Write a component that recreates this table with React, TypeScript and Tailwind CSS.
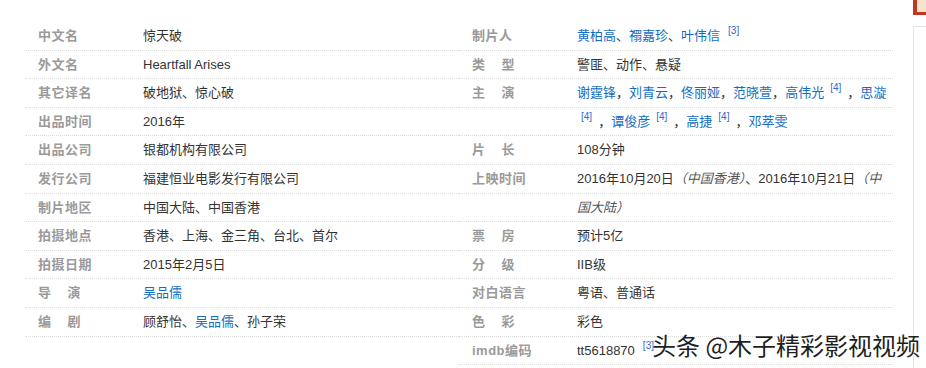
import type { ReactNode } from 'react';

type Row = { label?: string; value: ReactNode };

const A = ({ children }: { children: ReactNode }) => (
  <a className="text-[#136ec2] no-underline">{children}</a>
);

const Ref = ({ n, className = '' }: { n: number; className?: string }) => (
  <span className={`relative -top-[6px] text-[10px] text-[#3366cc] ${className}`}>[{n}]</span>
);

const Note = ({ children }: { children: ReactNode }) => (
  <span className="italic text-[#555]">{children}</span>
);

const leftRows: Row[] = [
  { label: '中文名', value: '惊天破' },
  { label: '外文名', value: 'Heartfall Arises' },
  { label: '其它译名', value: '破地狱、惊心破' },
  { label: '出品时间', value: '2016年' },
  { label: '出品公司', value: '银都机构有限公司' },
  { label: '发行公司', value: '福建恒业电影发行有限公司' },
  { label: '制片地区', value: '中国大陆、中国香港' },
  { label: '拍摄地点', value: '香港、上海、金三角、台北、首尔' },
  { label: '拍摄日期', value: '2015年2月5日' },
  { label: '导演', value: <A>吴品儒</A> },
  {
    label: '编剧',
    value: (
      <>
        顾舒怡、<A>吴品儒</A>、孙子荣
      </>
    ),
  },
];

const rightRows: Row[] = [
  {
    label: '制片人',
    value: (
      <>
        <A>黄柏高</A>、<A>禤嘉珍</A>、<A>叶伟信</A>
        <Ref n={3} className="ml-[8px]" />
      </>
    ),
  },
  { label: '类型', value: '警匪、动作、悬疑' },
  {
    label: '主演',
    value: (
      <>
        <A>谢霆锋</A>，<A>刘青云</A>，<A>佟丽娅</A>，<A>范晓萱</A>，<A>高伟光</A>
        <Ref n={4} className="ml-[6px] mr-[6px]" />，<A>思漩</A>
      </>
    ),
  },
  {
    value: (
      <>
        <Ref n={4} className="ml-[4px] mr-[6px]" />，<A>谭俊彦</A>
        <Ref n={4} className="ml-[6px] mr-[6px]" />，<A>高捷</A>
        <Ref n={4} className="ml-[6px] mr-[6px]" />，<A>邓萃雯</A>
      </>
    ),
  },
  { label: '片长', value: '108分钟' },
  {
    label: '上映时间',
    value: (
      <>
        2016年10月20日<Note>（中国香港）</Note>、2016年10月21日<Note>（中</Note>
      </>
    ),
  },
  { value: <Note>国大陆）</Note> },
  { label: '票房', value: '预计5亿' },
  { label: '分级', value: 'IIB级' },
  { label: '对白语言', value: '粤语、普通话' },
  { label: '色彩', value: '彩色' },
  { label: 'imdb编码', value: <>tt5618870<Ref n={3} className="ml-[8px]" /></> },
];

function Label({ text }: { text?: string }) {
  if (!text) return <span className="w-[105px] shrink-0" />;
  const two = text.length === 2;
  return (
    <span className="w-[105px] shrink-0 font-bold text-[#9a9a9a] tracking-[0.5px]">
      {two ? (
        <>
          <span className="mr-[16px]">{text[0]}</span>
          {text[1]}
        </>
      ) : (
        text
      )}
    </span>
  );
}

function Block({ rows }: { rows: Row[] }) {
  return (
    <div className="w-[434px]">
      {rows.map((r, i) => (
        <div
          key={i}
          className="flex items-center h-[28.6px] pl-[13px] border-b border-dotted border-[#dcdcdc] whitespace-nowrap"
        >
          <Label text={r.label} />
          <span className="text-[#333]">{r.value}</span>
        </div>
      ))}
    </div>
  );
}

export default function App() {
  return (
    <div
      className="relative w-[926px] h-[368px] overflow-hidden bg-white flex text-[13px]"
      style={{ fontFamily: "'Liberation Sans', Arial, 'Noto Sans CJK SC', sans-serif" }}
    >
      <div className="w-[913px] shrink-0 pl-[25px] pt-[22px] flex items-start">
        <Block rows={leftRows} />
        <Block rows={rightRows} />
      </div>

      {/* sidebar edge */}
      <div className="flex-1 flex flex-col">
        <div className="h-[15px] border-l-[4px] border-b-[3px] border-[#c0361f] bg-[#f6e3cc]" />
        <div className="mt-[11px] flex-1 border-l border-t border-[#e3e3e3]" />
      </div>

      {/* watermark */}
      <div
        className="absolute left-[652px] top-[329px] text-[24px] leading-[32px] text-[#1f1f1f] whitespace-nowrap [text-shadow:0_0_2px_#fff,0_0_2px_#fff,1px_1px_1px_#fff]"
        style={{ fontFamily: "'Noto Sans CJK SC', sans-serif" }}
      >
        头条 @木子精彩影视视频
      </div>
    </div>
  );
}
